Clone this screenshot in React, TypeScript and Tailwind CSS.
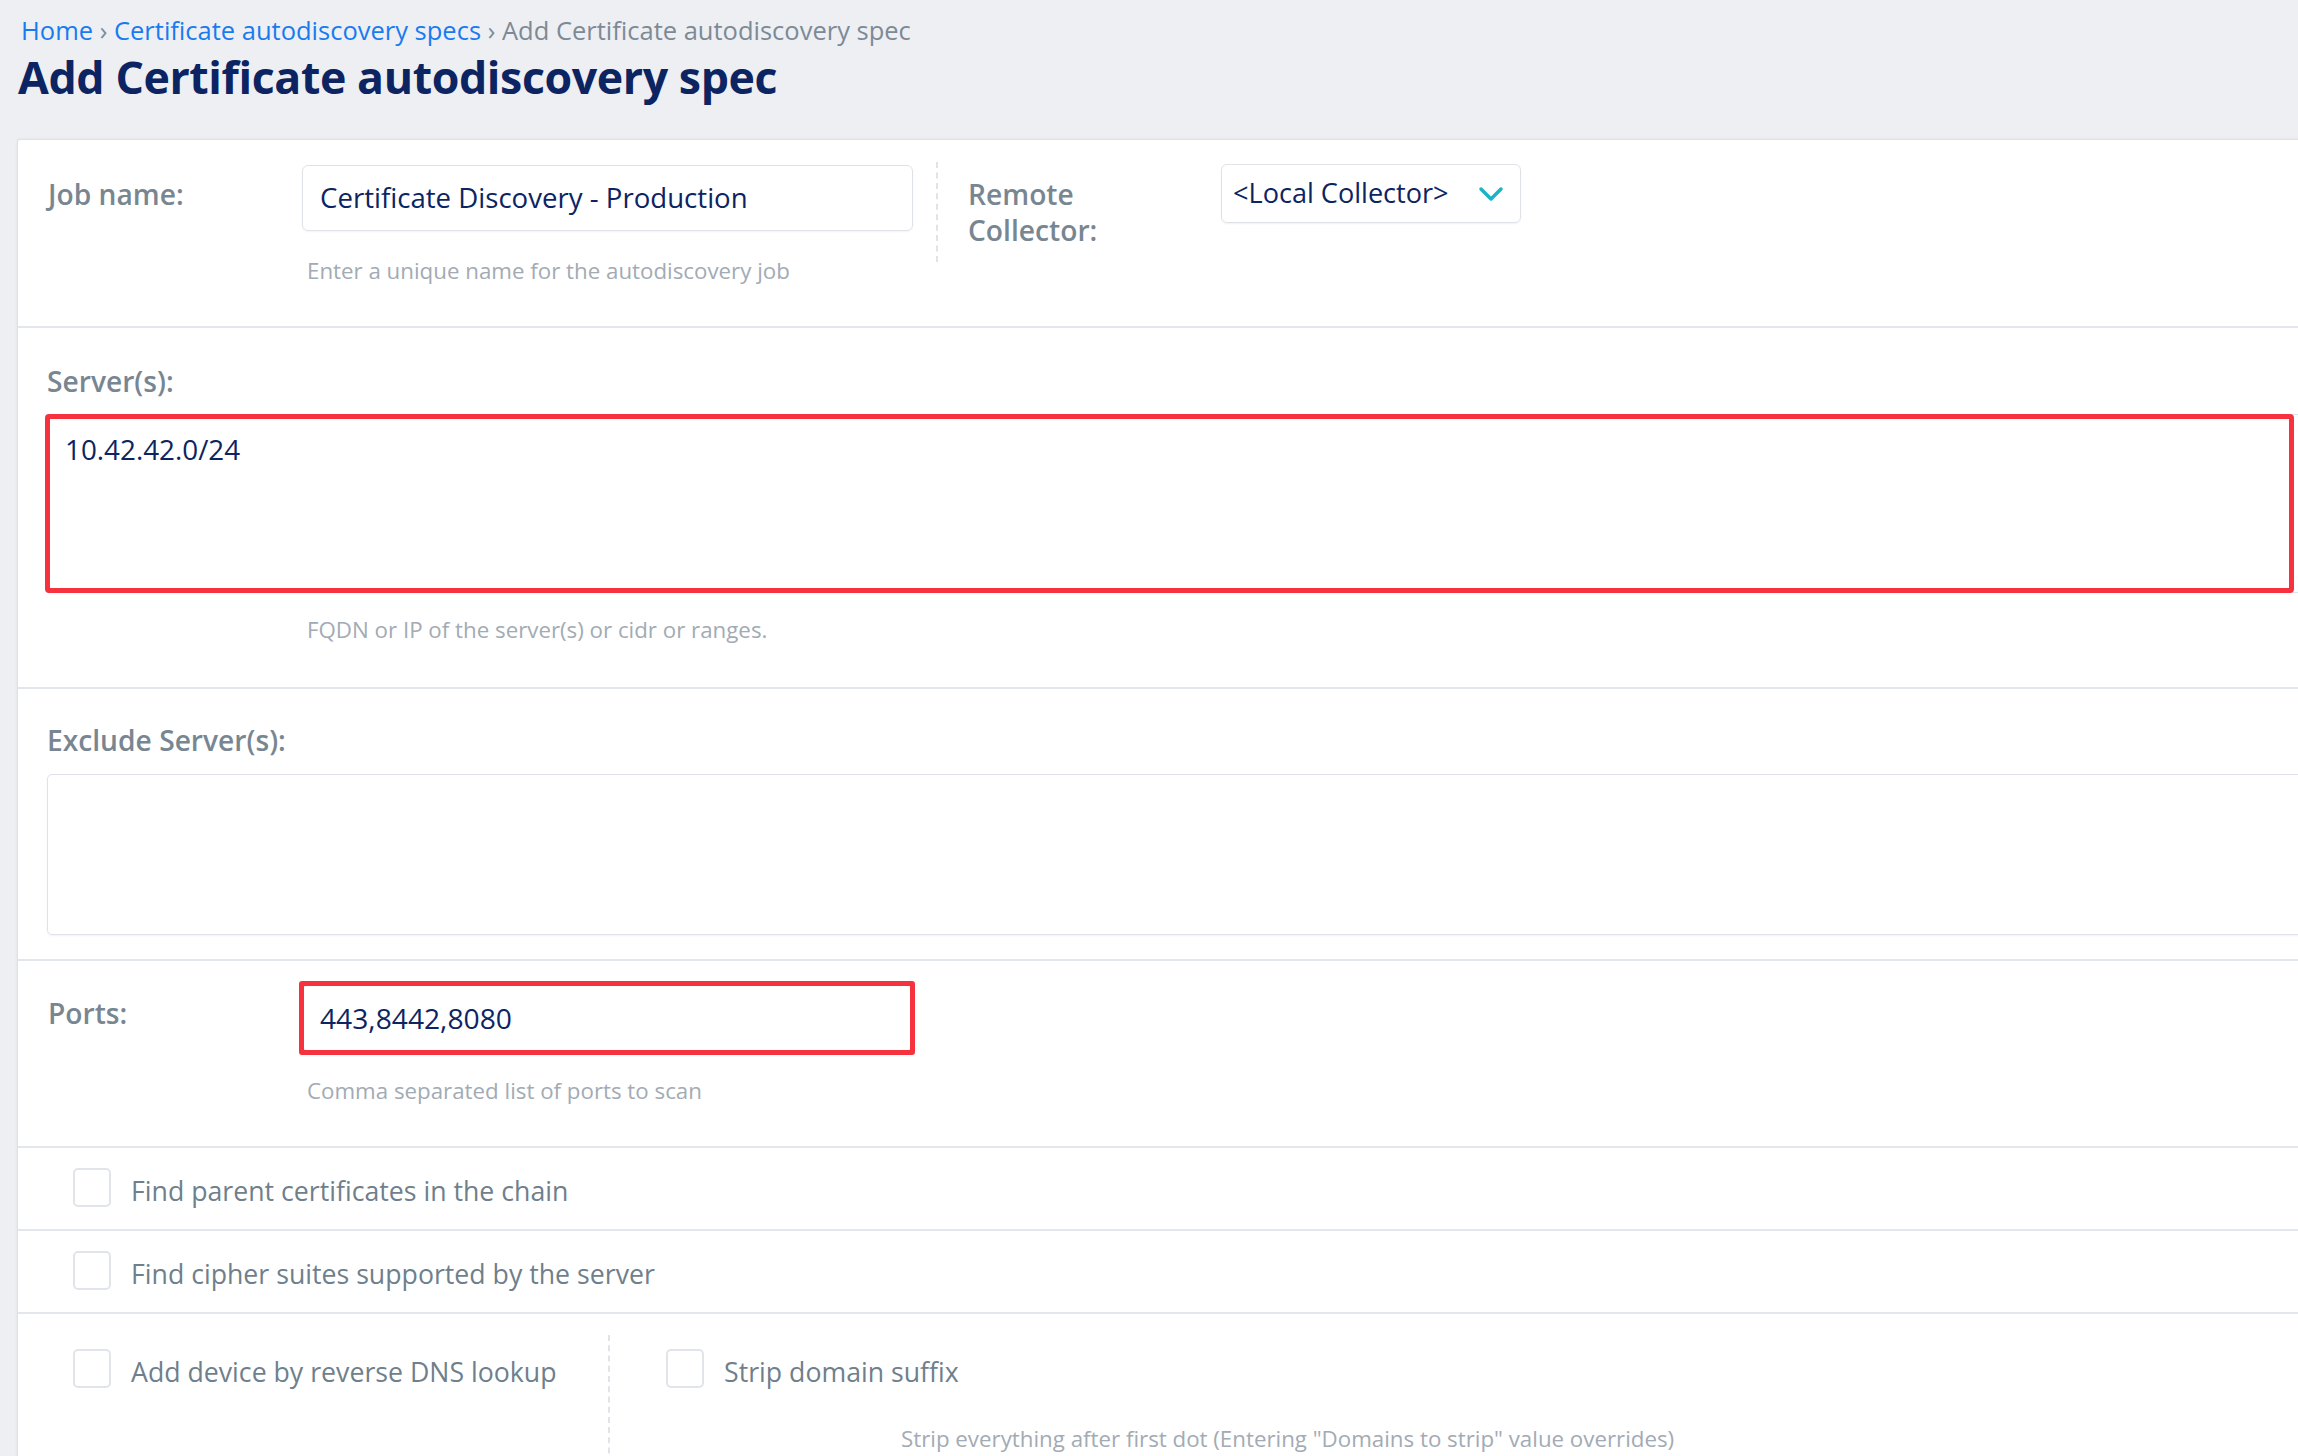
import React from "react";

const Chevron = () => (
  <svg width="26" height="16" viewBox="0 0 26 16" fill="none">
    <polyline points="3,3 13,13 23,3" stroke="#1bb3c8" strokeWidth="3.5" strokeLinecap="round" strokeLinejoin="round" />
  </svg>
);

const Checkbox = () => (
  <div className="w-[38px] h-[39px] shrink-0 rounded-[5px] border-2 border-[#e1e5ea] bg-white" />
);

export default function App() {
  return (
    <div
      className="w-full h-[1456px] overflow-hidden bg-[#edeff3]"
      style={{ fontFamily: "'Open Sans', 'Noto Sans', sans-serif" }}
    >
      {/* Header */}
      <div className="pl-[21px] pt-[14px]">
        <div className="text-[25.5px] leading-[32px] whitespace-nowrap">
          <span className="text-[#1a7bf0]">Home</span>
          <span className="text-[#7d8a96]"> › </span>
          <span className="text-[#1a7bf0]">Certificate autodiscovery specs</span>
          <span className="text-[#7d8a96]"> › Add Certificate autodiscovery spec</span>
        </div>
        <h1 className="mt-[2px] -ml-[3px] text-[44.7px] leading-[58px] font-bold text-[#0c2461] tracking-[-0.4px] whitespace-nowrap">
          Add Certificate autodiscovery spec
        </h1>
      </div>

      {/* Card */}
      <div className="ml-[17px] mt-[33px] w-[2400px] bg-white border-l border-t border-[#dde1e6] rounded-tl-[3px] shadow-[0_0_3px_rgba(0,0,0,0.06)]">
        {/* Section 1 */}
        <div className="h-[188px] border-b-2 border-[#e3e7eb] flex pl-[30px] pt-[25px]">
          <div className="w-[254px] shrink-0 mt-[11px] text-[28.2px] leading-[36px] font-semibold text-[#788692] whitespace-nowrap">
            Job name:
          </div>
          <div className="w-[611px] shrink-0">
            <div className="h-[66px] rounded-[6px] border border-[#dfe3e8] shadow-[0_1px_2px_rgba(0,0,0,0.05)] flex items-center pl-[17px] text-[27.6px] text-[#0c2461] whitespace-nowrap">
              Certificate Discovery - Production
            </div>
            <div className="mt-[26px] pl-[5px] text-[22.3px] leading-[28px] text-[#a2abb4] whitespace-nowrap">
              Enter a unique name for the autodiscovery job
            </div>
          </div>
          <div className="ml-[23px] mt-[-3px] h-[100px] border-l-2 border-dashed border-[#e0e4e8]" />
          <div className="ml-[30px] w-[253px] shrink-0 mt-[11px] text-[28.2px] leading-[36px] font-semibold text-[#788692]">
            Remote
            <br />
            Collector:
          </div>
          <div className="w-[300px] h-[59px] shrink-0 -mt-[1px] rounded-[6px] border border-[#dfe3e8] shadow-[0_1px_2px_rgba(0,0,0,0.06)] flex items-center justify-between pl-[11px] pr-[16px]">
            <span className="text-[27.1px] text-[#0c2461] whitespace-nowrap">&lt;Local Collector&gt;</span>
            <Chevron />
          </div>
        </div>

        {/* Section 2 */}
        <div className="h-[361px] border-b-2 border-[#e3e7eb] pl-[29px] pt-[35px]">
          <div className="text-[28.2px] leading-[36px] font-semibold text-[#788692]">Server(s):</div>
          <div className="relative mt-[15px] h-[179px]">
            <div className="h-full w-[2400px] rounded-[5px] border border-[#dfe3e8] pl-[17px] pt-[17px] text-[27.8px] leading-[34px] text-[#0c2461]">
              10.42.42.0/24
            </div>
            <div className="absolute -left-[2px] top-0 w-[2249px] h-[179px] rounded-[4px] border-[5px] border-[#f7323f]" />
          </div>
          <div className="mt-[23px] pl-[260px] text-[22.3px] leading-[28px] text-[#a2abb4]">
            FQDN or IP of the server(s) or cidr or ranges.
          </div>
        </div>

        {/* Section 3 */}
        <div className="h-[272px] border-b-2 border-[#e3e7eb] pl-[29px] pt-[33px]">
          <div className="text-[28.2px] leading-[36px] font-semibold text-[#788692]">Exclude Server(s):</div>
          <div className="mt-[16px] h-[161px] w-[2400px] rounded-[5px] border border-[#dfe3e8] shadow-[0_1px_2px_rgba(0,0,0,0.05)]" />
        </div>

        {/* Section 4 */}
        <div className="h-[187px] border-b-2 border-[#e3e7eb] flex pl-[30px] pt-[24px]">
          <div className="w-[254px] shrink-0 mt-[10px] text-[28.2px] leading-[36px] font-semibold text-[#788692]">
            Ports:
          </div>
          <div className="w-[611px] shrink-0">
            <div className="relative h-[66px]">
              <div className="h-full rounded-[6px] border border-[#dfe3e8] flex items-center pl-[17px] text-[28.2px] text-[#0c2461]">
                443,8442,8080
              </div>
              <div className="absolute -left-[3px] -top-[4px] -right-[2px] -bottom-[4px] rounded-[3px] border-[5px] border-[#f7323f]" />
            </div>
            <div className="mt-[26px] pl-[5px] text-[22.3px] leading-[28px] text-[#a2abb4] whitespace-nowrap">
              Comma separated list of ports to scan
            </div>
          </div>
        </div>

        {/* Checkbox rows */}
        <div className="h-[83px] border-b-2 border-[#e3e7eb] flex items-start pl-[55px] pt-[20px]">
          <Checkbox />
          <span className="ml-[20px] mt-[6px] text-[26.7px] leading-[34px] text-[#6f7f8c] whitespace-nowrap">
            Find parent certificates in the chain
          </span>
        </div>
        <div className="h-[83px] border-b-2 border-[#e3e7eb] flex items-start pl-[55px] pt-[20px]">
          <Checkbox />
          <span className="ml-[20px] mt-[6px] text-[26.7px] leading-[34px] text-[#6f7f8c] whitespace-nowrap">
            Find cipher suites supported by the server
          </span>
        </div>
        <div className="h-[200px] flex pl-[55px]">
          <div className="w-[535px] shrink-0 flex items-start pt-[35px]">
            <Checkbox />
            <span className="ml-[20px] mt-[6px] text-[26.7px] leading-[34px] text-[#6f7f8c] whitespace-nowrap">
              Add device by reverse DNS lookup
            </span>
          </div>
          <div className="mt-[21px] h-[180px] border-l-2 border-dashed border-[#e0e4e8]" />
          <div className="ml-[56px] pt-[35px]">
            <div className="flex items-start">
              <Checkbox />
              <span className="ml-[20px] mt-[6px] text-[26.7px] leading-[34px] text-[#6f7f8c] whitespace-nowrap">
                Strip domain suffix
              </span>
            </div>
            <div className="mt-[36px] ml-[235px] text-[22.3px] leading-[28px] text-[#a2abb4] whitespace-nowrap">
              Strip everything after first dot (Entering "Domains to strip" value overrides)
            </div>
          </div>
        </div>
      </div>
    </div>
  );
}
